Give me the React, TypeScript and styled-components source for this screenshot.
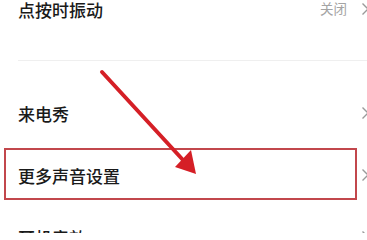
import React from "react";
import styled, { createGlobalStyle } from "styled-components";

const Global = createGlobalStyle`
  html, body { margin: 0; padding: 0; background: #fff; }
  body { width: 367px; height: 233px; overflow: hidden; }
`;

const Page = styled.div`
  position: relative;
  width: 367px;
  height: 233px;
  overflow: hidden;
  background: #ffffff;
  font-family: "Noto Sans CJK SC", "Noto Sans", sans-serif;
`;

const List = styled.div`
  display: flex;
  flex-direction: column;
  margin-top: -22px;
`;

const Row = styled.div<{ $h?: number }>`
  position: relative;
  display: flex;
  align-items: center;
  height: ${(p) => p.$h ?? 62}px;
  padding-left: 18px;
  padding-right: 0;
`;

const Label = styled.span`
  flex: 1;
  font-size: 17px;
  font-weight: 500;
  color: #1a1a1a;
  line-height: 1;
`;

const Value = styled.span`
  font-size: 13.5px;
  color: #a4a4a4;
  margin-right: 14px;
  line-height: 1;
`;

const Gap = styled.div<{ $h: number }>`
  height: ${(p) => p.$h}px;
`;

const Divider = styled.div`
  height: 1px;
  margin-left: 18px;
  background: #efefef;
`;

const Chevron = styled.svg`
  width: 9px;
  height: 14px;
  margin-right: -3px;
  flex: none;
`;

const Highlight = styled.div`
  position: absolute;
  left: 4px;
  top: 4px;
  width: 353px;
  height: 52px;
  box-sizing: border-box;
  border: 2px solid #c2474c;
  pointer-events: none;
`;

const ArrowLayer = styled.svg`
  position: absolute;
  left: 0;
  top: 0;
  width: 367px;
  height: 233px;
  pointer-events: none;
`;

const Arrow = () => (
  <Chevron viewBox="0 0 9 14">
    <path d="M1.5 1.5 L7 7 L1.5 12.5" fill="none" stroke="#9a9a9a" strokeWidth="1.4" />
  </Chevron>
);

export default function App() {
  return (
    <Page>
      <Global />
      <List>
        <Row>
          <Label>点按时振动</Label>
          <Value>关闭</Value>
          <Arrow />
        </Row>
        <Gap $h={20} />
        <Divider />
        <Gap $h={21} />
        <Row>
          <Label>来电秀</Label>
          <Arrow />
        </Row>
        <Row>
          <Label>更多声音设置</Label>
          <Arrow />
          <Highlight />
        </Row>
        <Row>
          <Label>耳机音效</Label>
          <Arrow />
        </Row>
      </List>
      <ArrowLayer viewBox="0 0 367 233">
        <line x1="102" y1="72" x2="183" y2="160" stroke="#d51f26" strokeWidth="4" strokeLinecap="round" />
        <polygon points="196,174 175,167 191,150" fill="#d51f26" />
      </ArrowLayer>
    </Page>
  );
}
